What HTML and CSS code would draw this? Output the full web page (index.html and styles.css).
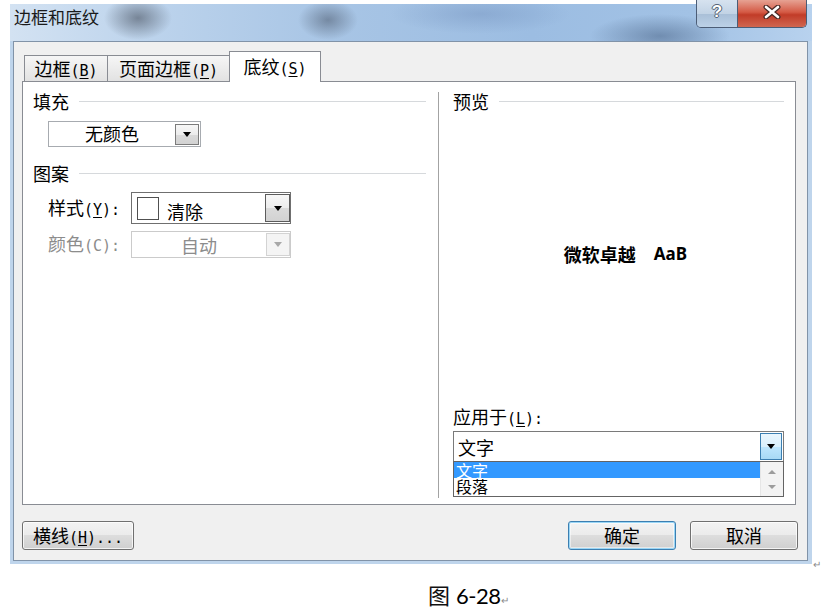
FILE: index.html
```html
<!DOCTYPE html>
<html lang="zh-CN">
<head>
<meta charset="utf-8">
<title>边框和底纹</title>
<link rel="stylesheet" href="styles.css">
</head>
<body>
<div class="page">
  <div class="win-row">
    <div class="window">
      <div class="titlebar">
        <span class="title">边框和底纹</span>
        <div class="caption-btns">
          <div class="cbtn help"><span>?</span></div>
          <div class="cbtn close">
            <svg width="18" height="14" viewBox="0 0 18 14">
              <path d="M3 2 L15 12 M15 2 L3 12" stroke="#4a2a26" stroke-width="5" stroke-linecap="round" fill="none"/>
              <path d="M3 2 L15 12 M15 2 L3 12" stroke="#ffffff" stroke-width="2.6" stroke-linecap="round" fill="none"/>
            </svg>
          </div>
        </div>
      </div>
      <div class="frame-body">
        <div class="client">
          <div class="tabs">
            <div class="tab tab-first">边框<span class="ak">(<u>B</u>)</span></div>
            <div class="tab tab-mid">页面边框<span class="ak">(<u>P</u>)</span></div>
            <div class="tab active">底纹<span class="ak">(<u>S</u>)</span></div>
          </div>
          <div class="panel">
            <div class="left">
              <div class="group-head"><span>填充</span><i class="rule"></i></div>
              <div class="fill-combo">
                <span class="fill-text">无颜色</span>
                <span class="drop-btn small"><i class="tri"></i></span>
              </div>
              <div class="group-head g2"><span>图案</span><i class="rule"></i></div>
              <div class="field-row style-row">
                <span class="field-label">样式<span class="ak">(<u>Y</u>):</span></span>
                <div class="combo style-combo">
                  <span class="swatch"></span>
                  <span class="style-text">清除</span>
                  <span class="drop-btn big"><i class="tri"></i></span>
                </div>
              </div>
              <div class="field-row color-row">
                <span class="field-label disabled">颜色<span class="ak">(C):</span></span>
                <div class="combo color-combo">
                  <span class="color-text">自动</span>
                  <span class="drop-btn dis"><i class="tri"></i></span>
                </div>
              </div>
            </div>
            <div class="vdivider"></div>
            <div class="right">
              <div class="group-head"><span>预览</span><i class="rule"></i></div>
              <div class="preview"><span class="pv-cn">微软卓越</span><span class="pv-en">AaB</span></div>
              <div class="apply-label">应用于<span class="ak">(<u>L</u>):</span></div>
              <div class="apply-combo">
                <span class="apply-text">文字</span>
                <span class="drop-btn hot"><i class="tri"></i></span>
              </div>
              <div class="apply-list">
                <div class="rows">
                  <div class="row sel">文字</div>
                  <div class="row">段落</div>
                </div>
                <div class="vscroll"><i class="arrow up"></i><i class="arrow down"></i></div>
              </div>
            </div>
          </div>
          <div class="buttons">
            <div class="btn hline">横线<span class="ak">(<u>H</u>)...</span></div>
            <div class="btn ok">确定</div>
            <div class="btn cancel">取消</div>
          </div>
        </div>
      </div>
    </div>
    <span class="para-mark">↵</span>
  </div>
  <div class="caption"><span class="cap-cn">图</span><span class="cap-num">6-28</span><span class="cap-mark">↵</span></div>
</div>
</body>
</html>
```

FILE: styles.css
```css
* { box-sizing: border-box; margin: 0; padding: 0; }
html, body { background: #ffffff; }
body {
  width: 833px;
  height: 611px;
  overflow: hidden;
  font-family: "Noto Sans CJK SC", "Noto Sans", sans-serif;
  font-size: 18px;
  line-height: 20px;
  color: #000;
}
i { display: block; font-style: normal; }
.ak { font-family: "DejaVu Sans Mono", "Liberation Mono", monospace; font-size: 15px; }
.ak u { text-decoration: underline; text-underline-offset: 2px; text-decoration-thickness: 1px; }

.page { padding: 4px 0 0 10px; }
.win-row { display: flex; align-items: flex-end; }

.window {
  width: 802px;
  display: flex;
  flex-direction: column;
  background: #bfd5ec;
}
.titlebar {
  height: 37px;
  display: flex;
  align-items: flex-start;
  padding: 3px 5px 0 4px;
  background:
    radial-gradient(ellipse 34px 22px at 128px 14px, rgba(80, 90, 105, 0.65), rgba(80, 90, 105, 0) 100%),
    radial-gradient(ellipse 30px 20px at 318px 16px, rgba(75, 88, 108, 0.55), rgba(75, 88, 108, 0) 100%),
    radial-gradient(ellipse 70px 22px at 650px 32px, rgba(65, 90, 125, 0.5), rgba(65, 90, 125, 0) 100%),
    radial-gradient(ellipse 90px 20px at 470px 10px, rgba(110, 140, 185, 0.4), rgba(110, 140, 185, 0) 100%),
    linear-gradient(to right, #d3e2f2 0%, #bcd3ec 18%, #a8c5e5 40%, #9cbde2 65%, #a2c2e5 85%, #b8d2ee 100%);
}
.title { font-size: 17px; line-height: 20px; color: #1a1a1a; }
.caption-btns {
  margin-left: auto;
  margin-top: -7px;
  height: 28px;
  display: flex;
  border: 1px solid #4c5d76;
  border-top: none;
  border-radius: 0 0 5px 5px;
  overflow: hidden;
}
.cbtn { height: 100%; display: flex; align-items: center; justify-content: center; }
.help {
  width: 41px;
  border-right: 1px solid #4c5d76;
  background: linear-gradient(#d6e2ef 0%, #c2d3e5 50%, #a9bfd7 51%, #bcd1e7 100%);
}
.help span {
  font-family: "Liberation Sans", sans-serif;
  font-weight: 700;
  font-size: 17px;
  color: #fff;
  margin-top: -4px;
  text-shadow: 0 0 1px #3c4a5c, 1px 0 0 #5a687a, -1px 0 0 #5a687a, 0 1px 0 #5a687a, 0 -1px 0 #5a687a;
}
.close {
  width: 68px;
  background: linear-gradient(#e6a293 0%, #d45a45 45%, #c13c28 55%, #d06650 100%);
}
.close svg { margin-top: -4px; }

.frame-body { padding: 0 4px 3px 3px; }
.client {
  height: 520px;
  border: 1px solid #8193a8;
  background: #f0f0f0;
  padding: 9px 11px 10px 8px;
  display: flex;
  flex-direction: column;
}

.tabs { display: flex; align-items: flex-end; height: 30px; margin-left: 2px; }
.tab {
  height: 26px;
  border: 1px solid #898c93;
  border-bottom: none;
  background: linear-gradient(#f6f6f6, #e2e2e2);
  text-align: center;
  line-height: 24px;
  white-space: nowrap;
}
.tab-first { width: 84px; }
.tab-mid { width: 121px; border-left: none; border-right: none; }
.tab.active {
  width: 92px;
  height: 31px;
  margin-bottom: -1px;
  background: #ffffff;
  line-height: 29px;
  position: relative;
  z-index: 1;
}

.panel {
  height: 424px;
  border: 1px solid #898c93;
  background: #ffffff;
  display: flex;
}
.left { width: 415px; padding: 9px 12px 0 10px; }
.group-head { display: flex; align-items: center; height: 20px; }
.rule { flex: 1; height: 1px; background: #d6d9dc; margin-left: 10px; }
.g2 { margin-top: 16px; }

.fill-combo {
  margin: 10px 0 0 15px;
  width: 153px;
  height: 26px;
  border: 1px solid #a7abb0;
  display: flex;
  align-items: flex-start;
  background: #fff;
}
.fill-text { flex: 1; text-align: center; line-height: 23px; }

.drop-btn {
  display: flex;
  align-items: center;
  justify-content: center;
  border: 1px solid #7b7b7b;
  background: linear-gradient(#f7f7f7 0%, #ececec 50%, #dadada 51%, #d2d2d2 100%);
}
.tri {
  width: 0;
  height: 0;
  border-left: 4px solid transparent;
  border-right: 4px solid transparent;
  border-top: 5px solid #000;
}
.drop-btn.small { width: 24px; height: 21px; margin: 2px 1px 0 0; }

.field-row { display: flex; align-items: center; margin-left: 15px; }
.field-label { width: 83px; white-space: nowrap; }
.field-label.disabled { color: #8c8c8c; }
.style-row { margin-top: 9px; height: 32px; }
.color-row { margin-top: 7px; height: 27px; }
.combo { width: 160px; display: flex; align-items: center; background: #fff; border: 1px solid #6f6f6f; }
.style-combo { height: 32px; }
.swatch { width: 22px; height: 23px; border: 1px solid #505050; margin-left: 5px; background: #fff; }
.style-text { flex: 1; padding: 6px 0 0 8px; }
.drop-btn.big { width: 25px; height: 28px; border-color: #5c5c5c; }
.color-combo { height: 27px; border-color: #cbcbcb; }
.color-text { flex: 1; text-align: center; color: #8c8c8c; }
.drop-btn.dis { width: 24px; height: 23px; border-color: #d3d3d3; background: #f4f4f4; }
.drop-btn.dis .tri { border-top-color: #a8a8a8; }

.vdivider { width: 1px; background: #a3a3a3; margin: 10px 0 6px; }

.right {
  flex: 1;
  padding: 9px 11px 7px 14px;
  display: flex;
  flex-direction: column;
}
.preview {
  flex: 1;
  display: flex;
  align-items: center;
  justify-content: center;
  padding: 0 0 10px 14px;
}
.pv-cn { font-weight: 700; font-size: 18px; }
.pv-en { font-family: "Noto Sans", sans-serif; font-weight: 700; font-size: 17px; margin-left: 18px; }
.apply-label { height: 20px; white-space: nowrap; }
.apply-combo {
  margin-top: 5px;
  height: 31px;
  border: 1px solid #7a7a7a;
  display: flex;
  align-items: center;
  background: #fff;
}
.apply-text { flex: 1; padding-left: 4px; }
.drop-btn.hot {
  width: 22px;
  height: 27px;
  margin-right: 1px;
  border-color: #3c7fb1;
  background: linear-gradient(#eaf6fd 0%, #d9f0fc 50%, #bee6fd 51%, #a7d9f5 100%);
}
.apply-list {
  margin-top: -1px;
  height: 36px;
  border: 1px solid #646464;
  display: flex;
  background: #fff;
}
.rows { flex: 1; overflow: hidden; }
.row { height: 17px; line-height: 17px; font-size: 16px; padding-left: 2px; white-space: nowrap; }
.row.sel { height: 16px; line-height: 16px; background: #3399ff; color: #fff; }
.vscroll {
  width: 23px;
  background: #f3f3f3;
  border-left: 1px solid #e6e6e6;
  display: flex;
  flex-direction: column;
  align-items: center;
  justify-content: space-around;
  padding: 2px 0;
}
.arrow { width: 0; height: 0; border-left: 4px solid transparent; border-right: 4px solid transparent; }
.arrow.up { border-bottom: 4px solid #9c9c9c; }
.arrow.down { border-top: 4px solid #9c9c9c; }

.buttons { display: flex; margin-top: 16px; height: 29px; margin-right: -2px; }
.btn {
  height: 29px;
  border: 1px solid #707070;
  border-radius: 3px;
  background: linear-gradient(#f3f3f3 0%, #ebebeb 49%, #dddddd 50%, #cfcfcf 100%);
  box-shadow: inset 0 0 0 1px rgba(255, 255, 255, 0.75);
  line-height: 27px;
  text-align: center;
  white-space: nowrap;
}
.hline { width: 112px; }
.ok {
  width: 108px;
  margin-left: auto;
  border-color: #3c7fb1;
  box-shadow: inset 0 0 0 1px #9ad6f6, inset 0 0 0 2px rgba(255, 255, 255, 0.5);
}
.cancel { width: 108px; margin-left: 14px; }

.para-mark { font-size: 10px; line-height: 10px; color: #8a8a8a; margin: 0 0 -5px 1px; }

.caption {
  margin-top: 17px;
  padding-left: 418px;
  display: flex;
  align-items: baseline;
  height: 28px;
}
.cap-cn { font-size: 22px; line-height: 26px; color: #111; }
.cap-num { font-family: "Lato", "Open Sans", sans-serif; font-size: 22px; line-height: 26px; margin-left: 6px; letter-spacing: -0.5px; color: #000; }
.cap-mark { font-size: 10px; color: #8a8a8a; margin-left: 1px; }
```
